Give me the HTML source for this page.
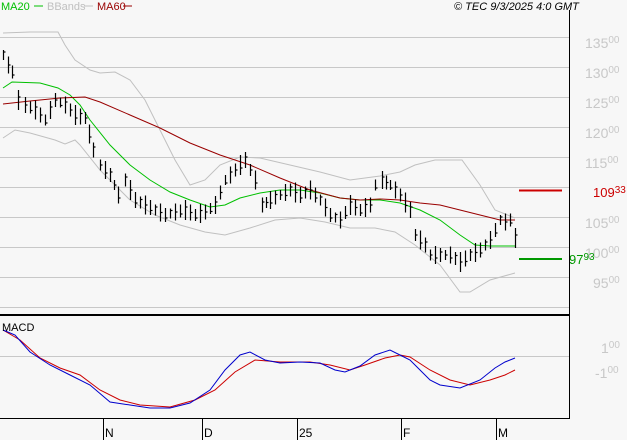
<!DOCTYPE html><html><head><style>body{margin:0;background:#f7f7f7}svg{display:block;font-family:"Liberation Sans",sans-serif}</style></head><body>
<svg id="s" width="627" height="440" xmlns="http://www.w3.org/2000/svg">
<rect width="627" height="440" fill="#f7f7f7"/>
<g stroke="#c8c8c8" stroke-width="1">
<line x1="0" y1="37.5" x2="569" y2="37.5"/><line x1="0" y1="67.5" x2="569" y2="67.5"/><line x1="0" y1="97.5" x2="569" y2="97.5"/><line x1="0" y1="127.5" x2="569" y2="127.5"/><line x1="0" y1="157.5" x2="569" y2="157.5"/><line x1="0" y1="187.5" x2="569" y2="187.5"/><line x1="0" y1="217.5" x2="569" y2="217.5"/><line x1="0" y1="247.5" x2="569" y2="247.5"/><line x1="0" y1="277.5" x2="569" y2="277.5"/><line x1="0" y1="307.5" x2="569" y2="307.5"/><line x1="0" y1="356.5" x2="569" y2="356.5"/>
</g>
<g fill="#c8c8c8" font-size="14"><text x="585" y="48">135<tspan font-size="10" dy="-5">00</tspan></text><text x="585" y="78">130<tspan font-size="10" dy="-5">00</tspan></text><text x="585" y="108">125<tspan font-size="10" dy="-5">00</tspan></text><text x="585" y="138">120<tspan font-size="10" dy="-5">00</tspan></text><text x="585" y="168">115<tspan font-size="10" dy="-5">00</tspan></text><text x="585" y="228">105<tspan font-size="10" dy="-5">00</tspan></text><text x="585" y="258">100<tspan font-size="10" dy="-5">00</tspan></text><text x="593" y="288">95<tspan font-size="10" dy="-5">00</tspan></text><text x="601" y="353">1<tspan font-size="10" dy="-5">00</tspan></text><text x="595" y="378">-1<tspan font-size="10" dy="-5">00</tspan></text></g>
<line x1="519" y1="190.5" x2="562" y2="190.5" stroke="#c00" stroke-width="2"/>
<text x="593" y="197" font-size="13" fill="#c00">109<tspan font-size="10" dy="-4">33</tspan></text>
<line x1="519" y1="259" x2="562" y2="259" stroke="#090" stroke-width="2"/>
<text x="569" y="264" font-size="13" fill="#090">97<tspan font-size="10" dy="-4">93</tspan></text>
<g fill="none" stroke-width="1">
<polyline stroke="#c0c0c0" points="3,33 30,32 58,32 65,45 75,60 90,70 100,73 115,72 130,80 145,100 160,130 175,160 190,185 205,180 220,165 240,157 260,158 290,165 320,172 350,180 380,176 400,172 415,165 435,160 462,160 480,185 495,210 515,218"/>
<polyline stroke="#c0c0c0" points="3,138 15,130 30,133 55,140 65,144 75,140 80,145 100,170 130,200 155,215 180,225 205,232 225,235 250,228 275,220 300,218 325,222 350,228 375,228 395,232 415,245 440,265 460,292 470,292 490,280 515,273"/>
<polyline stroke="#00c000" points="3,88 12,82 40,83 58,88 70,95 80,105 90,120 110,145 130,165 150,180 170,192 190,200 210,207 225,205 240,198 260,193 280,190 300,190 320,193 340,198 360,200 380,200 400,203 420,210 440,220 460,235 475,245 490,246 515,246"/>
<polyline stroke="#990000" points="3,104 30,101 60,98 85,97 100,102 130,115 160,128 190,143 220,155 250,165 280,178 310,190 340,198 360,200 380,199 400,200 420,203 440,205 460,210 480,215 500,220 515,220"/>
<polyline stroke="#cc0000" points="3,330 20,340 40,358 60,368 80,375 100,390 120,400 140,405 170,407 195,400 215,390 235,372 255,360 280,362 310,362 330,365 350,370 365,365 385,358 400,355 410,357 430,370 450,380 470,385 490,380 505,375 515,370"/>
<polyline stroke="#0000cc" points="3,330 15,335 30,352 50,365 70,375 90,385 110,402 130,405 150,408 170,408 190,403 210,390 225,370 240,355 250,352 265,360 280,363 300,362 320,363 335,370 345,372 360,366 375,355 390,350 400,355 410,360 420,370 430,380 440,385 460,388 480,380 495,368 505,362 515,358"/>
</g>
<g id="bars" stroke="#000" stroke-width="1.2"></g>
<line x1="0" y1="315" x2="569" y2="315" stroke="#000" stroke-width="2"/>
<line x1="569.5" y1="10" x2="569.5" y2="419" stroke="#000"/>
<line x1="0" y1="418.5" x2="569" y2="418.5" stroke="#000"/>
<g stroke="#000"><line x1="103.5" y1="419" x2="103.5" y2="440"/><line x1="202.5" y1="419" x2="202.5" y2="440"/><line x1="297.5" y1="419" x2="297.5" y2="440"/><line x1="401.5" y1="419" x2="401.5" y2="440"/><line x1="496.5" y1="419" x2="496.5" y2="440"/></g>
<g font-size="12" fill="#000"><text x="105" y="437">N</text><text x="204" y="437">D</text><text x="299" y="437">25</text><text x="403" y="437">F</text><text x="498" y="437">M</text><text x="2" y="331" font-size="11">MACD</text></g>
<g font-size="11"><text x="1" y="10" fill="#00c000">MA20</text><line x1="34" y1="6" x2="43" y2="6" stroke="#00c000"/><text x="47" y="10" fill="#c0c0c0">BBands</text><line x1="84" y1="6" x2="93" y2="6" stroke="#c0c0c0"/><text x="97" y="10" fill="#990000">MA60</text><line x1="123" y1="6" x2="132" y2="6" stroke="#990000"/><text x="454" y="10" font-style="italic" fill="#000">© TEC 9/3/2025 4:0 GMT</text></g>
</svg>
<script>
var p=[[3,55],[8,65],[12,72],[18,100],[25,105],[35,110],[45,120],[55,100],[65,105],[75,115],[85,118],[93,150],[100,165],[110,175],[118,195],[125,180],[135,200],[145,205],[155,210],[165,215],[175,212],[185,210],[195,215],[205,212],[215,205],[225,180],[235,170],[245,160],[255,180],[262,205],[270,200],[280,195],[290,190],[300,195],[310,190],[320,200],[330,215],[340,220],[350,205],[360,210],[370,205],[375,185],[382,180],[390,185],[400,195],[410,210],[415,235],[425,245],[430,255],[440,255],[450,255],[460,262],[470,255],[480,250],[490,240],[495,230],[500,220],[505,222],[510,220],[515,238]];
var all=[];for(var i=0;i<p.length-1;i++){var a=p[i],b=p[i+1],n=Math.max(1,Math.round((b[0]-a[0])/5));for(var k=0;k<n;k++){var t=k/n;all.push([a[0]+(b[0]-a[0])*t,a[1]+(b[1]-a[1])*t]);}}all.push(p[p.length-1]);
var h='';all.forEach(function(q,i){var x=Math.round(q[0])+.5,y=q[1],d=6+((i*7)%11);h+='<line x1="'+x+'" y1="'+(y-d/2-2)+'" x2="'+x+'" y2="'+(y+d/2+2)+'"/><line x1="'+x+'" y1="'+(y+((i%3)-1)*3)+'" x2="'+(x+2)+'" y2="'+(y+((i%3)-1)*3)+'"/>';});
document.getElementById('bars').innerHTML=h;
</script>
</body></html>
